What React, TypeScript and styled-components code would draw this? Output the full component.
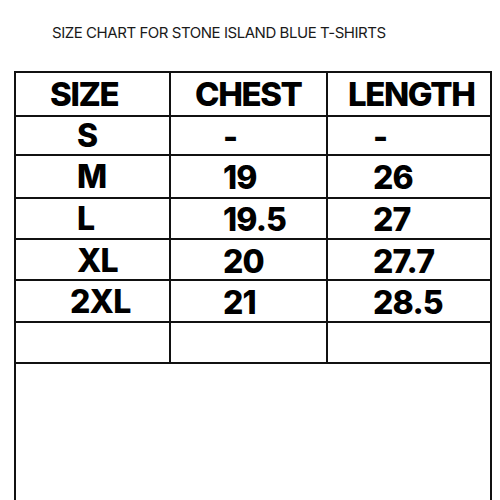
import React from "react";
import styled, { createGlobalStyle } from "styled-components";

const Global = createGlobalStyle`
  html, body {
    margin: 0;
    padding: 0;
    background: #ffffff;
    width: 500px;
    height: 500px;
    overflow: hidden;
  }
  * { box-sizing: border-box; }
`;

const Page = styled.div`
  width: 500px;
  height: 500px;
  overflow: hidden;
  background: #ffffff;
  display: flex;
  flex-direction: column;
  font-family: Inter, "Liberation Sans", sans-serif;
  color: #000;
`;

const Title = styled.h1`
  flex-shrink: 0;
  margin: 0;
  padding: 24px 0 0 52px;
  height: 71px;
  font-size: 15px;
  font-weight: 400;
  line-height: 18px;
  letter-spacing: -0.45px;
  color: #1a1a1a;
  white-space: nowrap;
`;

const Grid = styled.div`
  flex-shrink: 0;
  margin-left: 14px;
  width: 478px;
  display: grid;
  grid-template-columns: 153px 155px 162px;
  grid-template-rows: 41.5px 37.5px 40.5px 39.5px 39px 40px 38.5px 160px;
  gap: 2px;
  padding: 2px;
  background: #111;
`;

const Cell = styled.div<{ $indent: number; $head?: boolean; $dy?: number }>`
  background: #fff;
  display: flex;
  align-items: center;
  padding-left: ${(p) => p.$indent}px;
  padding-top: ${(p) => p.$dy ?? 2}px;
  font-size: ${(p) => (p.$head ? 33 : 32)}px;
  font-weight: 800;
  letter-spacing: ${(p) => (p.$head ? -1.4 : -0.8)}px;
  line-height: 1;
  white-space: nowrap;
`;

const Blank = styled.div`
  background: #fff;
  grid-column: 1 / span 3;
`;

type Row = { size: string; sizeIndent?: number; chest: string; length: string };

const rows: Row[] = [
  { size: "S", chest: "-", length: "-" },
  { size: "M", chest: "19", length: "26" },
  { size: "L", chest: "19.5", length: "27" },
  { size: "XL", chest: "20", length: "27.7" },
  { size: "2XL", sizeIndent: 54, chest: "21", length: "28.5" },
  { size: "", chest: "", length: "" },
];

export default function App() {
  return (
    <Page>
      <Global />
      <Title>SIZE CHART FOR STONE ISLAND BLUE T-SHIRTS</Title>
      <Grid>
        <Cell $head $indent={34}>SIZE</Cell>
        <Cell $head $indent={24}>CHEST</Cell>
        <Cell $head $indent={20}>LENGTH</Cell>
        {rows.map((r, i) => (
          <React.Fragment key={i}>
            <Cell $indent={r.sizeIndent ?? 61}>{r.size}</Cell>
            <Cell $indent={52} $dy={4}>{r.chest}</Cell>
            <Cell $indent={45} $dy={4}>{r.length}</Cell>
          </React.Fragment>
        ))}
        <Blank />
      </Grid>
    </Page>
  );
}
